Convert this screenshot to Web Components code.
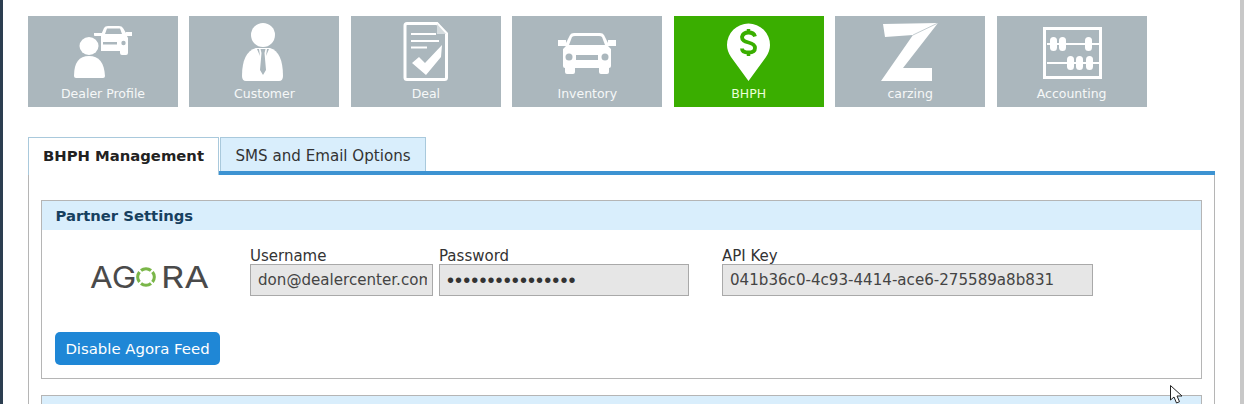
<!DOCTYPE html>
<html><head><meta charset="utf-8"><title>BHPH</title>
<style>
html,body{margin:0;padding:0;background:#fff;overflow:hidden}
body{font-family:"DejaVu Sans",Verdana,sans-serif;width:1244px;height:404px}
</style></head><body>
<app-shell>
  <tile-nav>
    <nav-tile label="Dealer Profile" icon="dealer"></nav-tile>
    <nav-tile label="Customer" icon="customer"></nav-tile>
    <nav-tile label="Deal" icon="deal"></nav-tile>
    <nav-tile label="Inventory" icon="inventory"></nav-tile>
    <nav-tile label="BHPH" icon="bhph" active></nav-tile>
    <nav-tile label="carzing" icon="carzing"></nav-tile>
    <nav-tile label="Accounting" icon="accounting"></nav-tile>
  </tile-nav>
  <tab-bar>
    <tab-item active>BHPH Management</tab-item>
    <tab-item>SMS and Email Options</tab-item>
  </tab-bar>
  <tab-panel>
    <settings-box heading="Partner Settings">
      <div style="display:flex;align-items:flex-start">
        <agora-logo></agora-logo>
        <text-field label="Username" value="don@dealercenter.com" w="183"></text-field>
        <text-field label="Password" value="••••••••••••••••" w="250" gap="6" pw></text-field>
        <text-field label="API Key" value="041b36c0-4c93-4414-ace6-275589a8b831" w="371" gap="33"></text-field>
      </div>
      <action-button>Disable Agora Feed</action-button>
    </settings-box>
    <settings-box></settings-box>
  </tab-panel>
</app-shell>
<script>
function def(name, html){
  customElements.define(name, class extends HTMLElement{
    connectedCallback(){
      if(this.shadowRoot) return;
      const r=this.attachShadow({mode:'open'});
      r.innerHTML = typeof html==='function'?html(this):html;
    }
  });
}
const W='#fff',G='#abb7bd';
const ICONS={
dealer:`<path fill="${W}" d="M73 19l3-7q1-2 4-2h11q3 0 4 2l3 5v-1h6v4h-5l1 2v15q0 2-2 2h-4q-2 0-2-2v-2H73z"/>
<path fill="${G}" d="M77 18l2-5.500h13l2 5.500z"/><rect x="75" y="26" width="14" height="2.500" fill="${G}"/><circle cx="95.500" cy="27" r="2.200" fill="${G}"/>
<rect x="66" y="17" width="8" height="3" fill="${W}"/>
<ellipse cx="61" cy="30" rx="12" ry="11.500" fill="${G}"/>
<path fill="${G}" d="M44 63q0-24 17-24t19 24z"/>
<ellipse cx="61" cy="30" rx="9.500" ry="9" fill="${W}"/>
<path fill="${W}" d="M46 60q0-20 15-20t16 20q0 2-2 2H48q-2 0-2-2z"/>`,
customer:`<circle cx="74" cy="19" r="12" fill="${W}"/>
<path fill="${W}" d="M53 60q0-24 14-28h14q13 4 13 28q0 5-4 5H57q-4 0-4-5z"/>
<path fill="${G}" d="M71.500 33h5l-1 4l1.500 17l-3 5l-3-5l1.500-17z"/>
<path fill="${G}" d="M68 33l3 7l-1-7zM80 33l-3 7l1-7z"/>`,
deal:`<path d="M56 7.500h30l9.500 10v44q0 2-2 2H56q-2 0-2-2V9.500q0-2 2-2z" fill="none" stroke="${W}" stroke-width="3"/>
<path d="M86 8v10h9z" fill="#d5dcdf"/>
<path d="M60 18h25M60 25h28M60 31.500h16" stroke="${W}" stroke-width="2.200" fill="none"/>
<path fill="${W}" d="M61 47l7-6l6 6l17-18l-1 12l-15 18z"/>`,
inventory:`<path fill="${W}" d="M54 27L58 19Q59 17 62 17H88Q91 17 92 19L96 27V24H104V30H96L99 33V50Q99 52 97 52V56Q97 58 95 58H89Q87 58 87 56V52H63V56Q63 58 61 58H55Q53 58 53 56V52Q51 52 51 50V33L54 30H46V24H54Z"/>
<path fill="${G}" d="M57 29L60 21Q61 20 63 20H87Q89 20 90 21L93 29Z"/>
<circle cx="57" cy="41" r="3.500" fill="${G}"/><circle cx="93" cy="41" r="3.500" fill="${G}"/><rect x="64" y="39" width="22" height="5" fill="${G}"/>`,
bhph:`<path fill="${W}" d="M74.500 65L57 41q-4-6-4-12a21.500 21.500 0 0 1 43 0q0 6-4 12z"/>
<path fill="none" stroke="#3aae00" stroke-width="3.800" d="M81 20.500q-1-4-6.500-4t-6.500 4.500q0 4 6.500 5.500t6.500 5.500q0 4.500-6.500 4.500t-6.500-4"/>
<path d="M74.500 13v4M74.500 36v4" stroke="#3aae00" stroke-width="3.500"/>`,
carzing:`<path fill="${W}" d="M48 8L103 7L68 52H97V65H46L78 19L50 21z"/>
<path stroke="${G}" stroke-width=".7" d="M103 7L78 19" fill="none"/>`,
accounting:`<rect x="47.500" y="12.500" width="56" height="49" fill="none" stroke="${W}" stroke-width="3"/>
<path d="M50 28h52M50 47h52" stroke="${W}" stroke-width="2"/>
<g fill="${W}"><rect x="53" y="21" width="7" height="14" rx="3.500"/><rect x="62" y="21" width="7" height="14" rx="3.500"/><rect x="88" y="21" width="7" height="14" rx="3.500"/>
<rect x="70" y="40" width="7" height="14" rx="3.500"/><rect x="79" y="40" width="7" height="14" rx="3.500"/><rect x="89" y="40" width="7" height="14" rx="3.500"/></g>`
};
def('app-shell',`<style>:host{display:block;box-sizing:border-box;width:1244px;height:404px;overflow:hidden;position:relative;padding:16px 29px 0 28px}
.edge{position:absolute;left:0;top:0;bottom:0;width:3px;background:#2c3e50}
.sb{position:absolute;right:0;top:0;bottom:0;width:4px;background:#c8c8c8}
svg{position:absolute;left:1170px;top:385px}</style>
<div class="edge"></div><div class="sb"></div><slot></slot>
<svg width="14" height="19" viewBox="0 0 14 19"><path d="M.5.500V15l3.500-3 2.500 6 3-1.300-2.500-5.700H12z" fill="#fff" stroke="#222" stroke-width="1"/></svg>`);
def('tile-nav',`<style>:host{display:flex;gap:11.45px}</style><slot></slot>`);
def('nav-tile',t=>`<style>:host{display:block;width:150px;height:91px;background:${t.hasAttribute('active')?'#3aae00':G};color:${t.hasAttribute('active')?'#eaffd8':'#f6f8f8'};flex:none}
svg{display:block}.l{text-align:center;font-size:12.500px;line-height:15px;white-space:nowrap}</style>
<svg width="150" height="70" viewBox="0 0 150 70">${ICONS[t.getAttribute('icon')]}</svg><div class="l">${t.getAttribute('label')}</div>`);
def('tab-bar',`<style>:host{display:flex;margin-top:30px;height:38px;width:1187px;box-sizing:border-box;border-bottom:4px solid #3d93d2}</style><slot></slot>`);
def('tab-item',t=>{const a=t.hasAttribute('active');return `<style>:host{display:block;box-sizing:border-box;height:${a?'38px':'34px'};padding:0 ${a?'14px':'14.5px'};margin-right:1px;
border:1px solid #a9c9dc;border-bottom:0;background:${a?'#fff':'#d9eefc'};color:${a?'#222':'#333'};font-size:${a?'14.8px':'15.1px'};font-weight:${a?'bold':'normal'};line-height:36px;white-space:nowrap;position:relative;z-index:1}</style><slot></slot>`});
def('tab-panel',`<style>:host{display:block;box-sizing:border-box;width:1187px;height:240px;border-left:1px solid #b5b5b5;border-right:1px solid #b5b5b5;padding:25px 12px 0 12px}
::slotted(settings-box:last-child){height:30px;margin-top:16px}</style><slot></slot>`);
def('settings-box',t=>{const h=t.getAttribute('heading');return `<style>:host{display:block;box-sizing:border-box;border:1px solid #b5b5b5;height:179px}
.h{height:29px;background:#d9eefc;color:#17405f;font-weight:bold;font-size:14.8px;line-height:29px;padding-left:13.5px}
.e{height:30px;background:#d9eefc}.b{padding:16px 13px 0 13px}</style>
${h?`<div class="h">${h}</div><div class="b"><slot></slot></div>`:`<div class="e"></div>`}`});
def('agora-logo',`<style>:host{display:flex;box-sizing:border-box;width:195px;height:50px;padding:12px 0 0 34.500px;color:#4a4a4a;font:400 30px/36px Inter,"Liberation Sans",sans-serif;align-items:center;white-space:nowrap}
span{display:block;transform-origin:0 50%;transform:scaleX(1.1)}
.a{width:47px}.b{width:50px;margin-left:5px;transform:scaleX(1.2)}
svg{flex:none;margin-left:-.5px}</style><span class="a">AG</span><svg width="20" height="20" viewBox="0 0 20 20"><g fill="none" stroke="#7ab648" stroke-width="3.200"><path d="M5 3.500A8 8 0 0 1 15 3.500"/><path d="M16.500 5A8 8 0 0 1 16.500 15"/><path d="M15 16.500A8 8 0 0 1 5 16.500"/><path d="M3.500 15A8 8 0 0 1 3.500 5"/></g></svg><span class="b">RA</span>`);
def('text-field',t=>{const pw=t.hasAttribute('pw');return `<style>:host{display:block;flex:none;margin-left:${t.getAttribute('gap')||0}px;width:${t.getAttribute('w')}px}
.l{font-size:15px;line-height:20px;height:18px;color:#333}
.i{box-sizing:border-box;height:32px;border:1px solid #a9a9a9;background:#e6e6e6;color:#444;font-size:15.1px;line-height:30px;padding:0 5px 0 7px;overflow:hidden;white-space:nowrap}
.c{overflow:hidden}${pw?'.c{font-family:"Liberation Sans",sans-serif;font-size:20px;letter-spacing:1.1px;color:#333}':''}</style><div class="l">${t.getAttribute('label')}</div><div class="i"><div class="c">${t.getAttribute('value')}</div></div>`});
def('action-button',`<style>:host{display:inline-block;box-sizing:border-box;margin-top:36px;height:33px;width:165px;background:#1f87d6;color:#fff;border-radius:5px;font-size:14.9px;line-height:35px;text-align:center;white-space:nowrap}</style><slot></slot>`);
</script></body></html>
